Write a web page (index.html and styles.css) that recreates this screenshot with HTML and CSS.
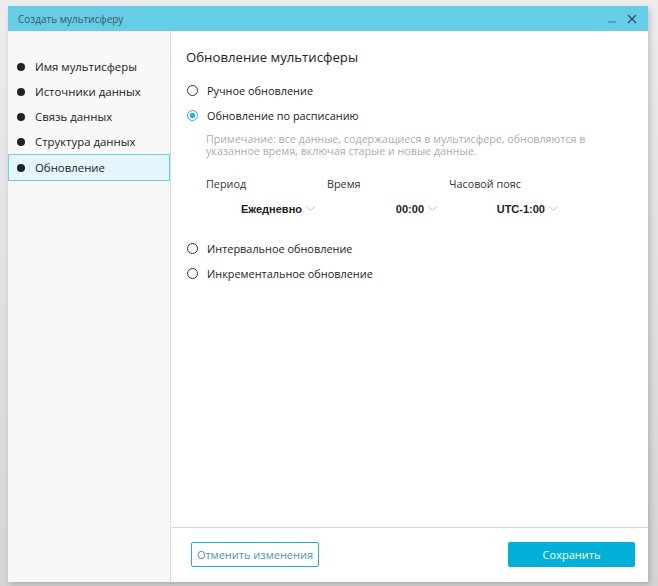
FILE: index.html
```html
<!DOCTYPE html>
<html lang="ru">
<head>
<meta charset="utf-8">
<link rel="stylesheet" href="styles.css">
</head>
<body>
<div class="window">
  <div class="titlebar">
    <span class="title">Создать мультисферу</span>
    <div class="controls">
      <span class="min"></span>
      <svg class="close" width="10" height="10" viewBox="0 0 10 10"><path d="M1 1L9 9M9 1L1 9" stroke="#2f4f6a" stroke-width="1.3"/></svg>
    </div>
  </div>
  <div class="main">
    <nav class="sidebar">
      <div class="step"><span class="dot"></span>Имя мультисферы</div>
      <div class="step"><span class="dot"></span>Источники данных</div>
      <div class="step"><span class="dot"></span>Связь данных</div>
      <div class="step"><span class="dot"></span>Структура данных</div>
      <div class="step active"><span class="dot"></span>Обновление</div>
    </nav>
    <section class="content">
      <div class="body">
        <h1 class="heading">Обновление мультисферы</h1>
        <div class="radio"><span class="circle"></span>Ручное обновление</div>
        <div class="radio"><span class="circle checked"></span>Обновление по расписанию</div>
        <p class="note">Примечание: все данные, содержащиеся в мультисфере, обновляются в<br>указанное время, включая старые и новые данные.</p>
        <div class="grid">
          <div class="lbl">Период</div>
          <div class="lbl">Время</div>
          <div class="lbl">Часовой пояс</div>
          <div class="val">Ежедневно<svg class="chev" width="9" height="6" viewBox="0 0 9 6"><path d="M0.5 0.5L4.5 4.5L8.5 0.5" fill="none" stroke="#c8c8c8"/></svg></div>
          <div class="val">00:00<svg class="chev" width="9" height="6" viewBox="0 0 9 6"><path d="M0.5 0.5L4.5 4.5L8.5 0.5" fill="none" stroke="#c8c8c8"/></svg></div>
          <div class="val">UTC-1:00<svg class="chev" width="9" height="6" viewBox="0 0 9 6"><path d="M0.5 0.5L4.5 4.5L8.5 0.5" fill="none" stroke="#c8c8c8"/></svg></div>
        </div>
        <div class="radio r3"><span class="circle"></span>Интервальное обновление</div>
        <div class="radio"><span class="circle"></span>Инкрементальное обновление</div>
      </div>
      <footer class="footer">
        <button class="btn cancel">Отменить изменения</button>
        <button class="btn save">Сохранить</button>
      </footer>
    </section>
  </div>
</div>
</body>
</html>
```
FILE: styles.css
```css
* { box-sizing: border-box; }
html, body { margin: 0; padding: 0; }
body {
  width: 658px;
  height: 586px;
  background: linear-gradient(to bottom, #ececec, #d4d4d4);
  font-family: "Open Sans", "Noto Sans", sans-serif;
  color: #222;
  overflow: hidden;
  padding: 6px 10px 0 8px;
}
.window {
  width: 640px;
  height: 576px;
  background: #fff;
  display: flex;
  flex-direction: column;
  box-shadow: 2px 3px 6px rgba(0,0,0,0.18);
}
.titlebar {
  height: 25px;
  background: #66cde6;
  display: flex;
  align-items: center;
  justify-content: space-between;
  padding: 0 11px 0 10px;
}
.title { font-size: 10px; color: #3f5661; }
.controls { display: flex; align-items: center; gap: 11px; }
.min { width: 8px; height: 2px; background: #4aa3bb; margin-top: 7px; }
.close { display: block; }
.main { flex: 1; display: flex; min-height: 0; }
.sidebar {
  width: 163px;
  background: #f8f8f8;
  border-right: 1px solid #dadada;
  padding-top: 23px;
}
.step {
  height: 25px;
  display: flex;
  align-items: center;
  padding-left: 9px;
  font-size: 11.4px;
  color: #222;
  white-space: nowrap;
}
.dot {
  width: 8px; height: 8px; border-radius: 50%;
  background: #222;
  margin-right: 10px;
}
.step.active {
  height: 27px;
  width: 162px;
  background: #e4f6fb;
  border: 1px solid #6dcfe6;
  padding-left: 8px;
}
.content { flex: 1; display: flex; flex-direction: column; }
.body { flex: 1; padding: 16px 15px 0 15px; }
.heading {
  margin: 0 0 11px 0;
  font-size: 13.2px;
  font-weight: 500;
  line-height: 20px;
  color: #222;
}
.radio {
  height: 25px;
  display: flex;
  align-items: center;
  font-size: 10.9px;
  color: #222;
  white-space: nowrap;
}
.circle {
  width: 11px; height: 11px; border-radius: 50%;
  border: 1px solid #333;
  margin: 0 9px 0 1px;
  background: #fff;
  flex: none;
}
.circle.checked {
  border-color: #1fb3d8;
  background: radial-gradient(circle, #1fb3d8 0 2.5px, #fff 3px);
}
.note {
  margin: 5px 0 0 20px;
  font-size: 10.7px;
  line-height: 12px;
  color: #adadad;
  white-space: nowrap;
}
.grid {
  margin: 14px 0 0 20px;
  display: grid;
  grid-template-columns: 121px 122px 121px;
  grid-auto-rows: 25px;
  width: 364px;
}
.lbl { font-size: 10.8px; color: #333; display: flex; align-items: center; }
.val {
  font-family: "Liberation Sans", Arial, sans-serif;
  font-size: 11px;
  font-weight: bold;
  color: #222;
  display: flex;
  align-items: center;
  justify-content: flex-end;
  padding-right: 12px;
}
.chev { margin-left: 4px; }
.r3 { margin-top: 15px; }
.footer {
  height: 55px;
  border-top: 1px solid #d8d8d8;
  display: flex;
  justify-content: space-between;
  align-items: flex-start;
  padding: 14px 13px 0 20px;
}
.btn {
  height: 25px;
  font-family: "Open Sans", "Noto Sans", sans-serif;
  font-size: 11px;
  border-radius: 2px;
  padding: 0;
  white-space: nowrap;
}
.cancel {
  width: 128px;
  background: #fff;
  border: 1px solid #22b1d5;
  color: #4a95b8;
}
.save {
  width: 127px;
  background: #00b0d8;
  border: none;
  color: #fff;
}
```
